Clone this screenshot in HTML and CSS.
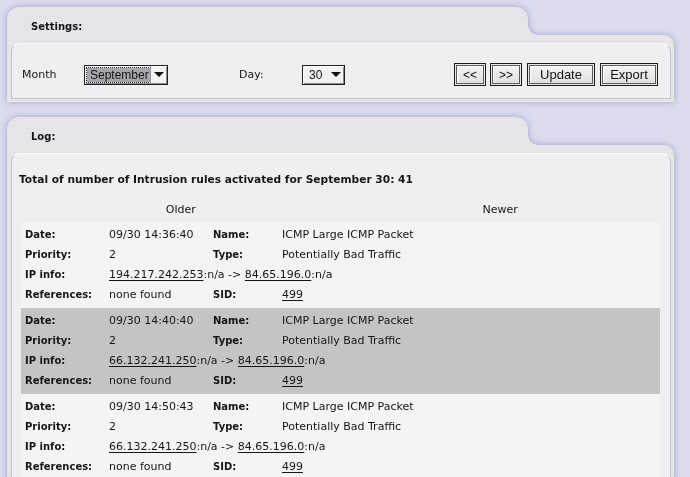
FILE: index.html
```html
<!DOCTYPE html>
<html>
<head>
<meta charset="utf-8">
<title>Intrusion log</title>
<link rel="stylesheet" href="styles.css">
</head>
<body>
<div class="panel">
  <div class="tab"><span class="tab-title">Settings:</span></div>
  <div class="body">
    <div class="inner settings">
      <span class="lbl lbl-month">Month</span>
      <div class="select select-month">
        <span class="select-value focused">September</span>
        <span class="select-arrow"><svg width="10" height="5" viewBox="0 0 10 5"><path d="M0 0H10L5 5Z" fill="#111"/></svg></span>
      </div>
      <span class="lbl lbl-day">Day:</span>
      <div class="select select-day">
        <span class="select-value">30</span>
        <span class="select-arrow"><svg width="10" height="5" viewBox="0 0 10 5"><path d="M0 0H10L5 5Z" fill="#111"/></svg></span>
      </div>
      <div class="buttons">
        <button class="btn btn-nav">&lt;&lt;</button>
        <button class="btn btn-nav">&gt;&gt;</button>
        <button class="btn btn-update">Update</button>
        <button class="btn btn-export">Export</button>
      </div>
    </div>
  </div>
</div>

<div class="panel panel-log">
  <div class="tab"><span class="tab-title">Log:</span></div>
  <div class="body">
    <div class="inner log">
      <div class="total">Total of number of Intrusion rules activated for September 30: 41</div>
      <div class="nav-head"><span>Older</span><span>Newer</span></div>
      <div class="entry">
        <b>Date:</b><span>09/30 14:36:40</span><b>Name:</b><span>ICMP Large ICMP Packet</span>
        <b>Priority:</b><span>2</span><b>Type:</b><span>Potentially Bad Traffic</span>
        <b>IP info:</b><span class="wide"><u>194.217.242.253</u>:n/a -&gt; <u>84.65.196.0</u>:n/a</span>
        <b>References:</b><span>none found</span><b>SID:</b><span><u>499</u></span>
      </div>
      <div class="entry alt">
        <b>Date:</b><span>09/30 14:40:40</span><b>Name:</b><span>ICMP Large ICMP Packet</span>
        <b>Priority:</b><span>2</span><b>Type:</b><span>Potentially Bad Traffic</span>
        <b>IP info:</b><span class="wide"><u>66.132.241.250</u>:n/a -&gt; <u>84.65.196.0</u>:n/a</span>
        <b>References:</b><span>none found</span><b>SID:</b><span><u>499</u></span>
      </div>
      <div class="entry">
        <b>Date:</b><span>09/30 14:50:43</span><b>Name:</b><span>ICMP Large ICMP Packet</span>
        <b>Priority:</b><span>2</span><b>Type:</b><span>Potentially Bad Traffic</span>
        <b>IP info:</b><span class="wide"><u>66.132.241.250</u>:n/a -&gt; <u>84.65.196.0</u>:n/a</span>
        <b>References:</b><span>none found</span><b>SID:</b><span><u>499</u></span>
      </div>
    </div>
  </div>
</div>
</body>
</html>
```

FILE: styles.css
```css
html, body {
  margin: 0;
  padding: 0;
  background: #dcdcee;
  overflow: hidden;
  height: 477px;
}
body {
  font-family: "DejaVu Sans", Verdana, sans-serif;
  font-size: 11px;
  color: #151515;
}
.panel {
  width: 667px;
  margin: 7px 0 0 7px;
  filter: drop-shadow(0 0 3px rgba(110, 110, 170, 0.55));
}
.panel-log {
  margin-top: 15px;
}
.tab {
  position: relative;
  width: 521px;
  height: 28px;
  box-sizing: border-box;
  padding: 13px 0 0 24px;
  border-radius: 12px 12px 0 0;
  background: repeating-linear-gradient(#e9e7eb 0 1px, #e3e1e6 1px 2px);
}
.tab::after {
  content: "";
  position: absolute;
  right: -10px;
  bottom: 0;
  width: 10px;
  height: 10px;
  background: radial-gradient(circle at 100% 0, transparent 9.5px, #e6e4e8 10px);
}
.tab-title {
  font-weight: bold;
  font-size: 10px;
  line-height: 14px;
  display: block;
}
.body {
  padding: 8px 3px 3px 4px;
  border-radius: 0 10px 0 0;
  background: repeating-linear-gradient(#e9e7eb 0 1px, #e3e1e6 1px 2px);
}
.inner {
  background: #f0eef1;
  border: 1px solid #c2c0c8;
  border-top-color: #ffffff;
  border-radius: 9px 9px 0 0;
}
.settings {
  display: flex;
  align-items: center;
  padding: 19px 12px 12px 10px;
  height: 23px;
}
.lbl-month {
  width: 62px;
}
.lbl-day {
  width: 63px;
  margin-left: 71px;
}
.select {
  display: flex;
  align-items: center;
  height: 20px;
  box-sizing: border-box;
  border: 1px solid #202020;
  background: #f2f2f2;
  box-shadow: inset 1px 1px 0 #ffffff, inset -1px -1px 0 #8a8a8a;
  font-family: "Liberation Sans", Arial, sans-serif;
  font-size: 12px;
}
.select-month {
  width: 84px;
}
.select-day {
  width: 43px;
}
.select-value {
  flex: 1;
  padding-left: 6px;
  line-height: 14px;
}
.select-value.focused {
  flex: none;
  width: 57px;
  margin-left: 2px;
  padding: 0 3px;
  background: #a6a6ac;
  outline: 1px dotted #222;
}
.select-arrow {
  width: 15px;
  height: 18px;
  display: flex;
  align-items: center;
  justify-content: center;
  padding-right: 1px;
}
.select-month .select-arrow {
  margin-left: auto;
  border-left: 1px solid #9a9a9a;
}
.buttons {
  margin-left: auto;
  display: flex;
  gap: 4px;
}
.btn {
  height: 23px;
  box-sizing: border-box;
  border: 1px solid #1c1c1c;
  background: linear-gradient(#f6f6f6, #dedede);
  box-shadow: inset 0 0 0 1px #e8e8e8, inset 0 0 0 2px #5a5a5a, inset 2px 2px 0 1px #ffffff;
  font-family: "Liberation Sans", Arial, sans-serif;
  font-size: 13px;
  color: #111;
  padding: 0;
  margin: 0;
}
.btn-nav {
  width: 32px;
  font-size: 12px;
}
.btn-update {
  width: 68px;
  margin-left: 1px;
}
.btn-export {
  width: 58px;
  margin-left: 1px;
}
.log {
  height: 360px;
}
.total {
  font-weight: bold;
  font-size: 10.65px;
  line-height: 14px;
  padding: 19px 0 0 7px;
}
.nav-head {
  display: grid;
  grid-template-columns: 1fr 1fr;
  margin: 13px 10px 0 9px;
  height: 22px;
  line-height: 20px;
  text-align: center;
}
.entry {
  display: grid;
  grid-template-columns: 84px 104px 69px 1fr;
  grid-auto-rows: 20px;
  align-items: center;
  margin: 0 10px 0 9px;
  padding: 2px 0 4px 4px;
  background: #f6f3f6;
}
.entry.alt {
  background: #c4c4c4;
}
.entry b {
  font-size: 10px;
}
.entry .wide {
  grid-column: 2 / 5;
}
.entry u {
  text-decoration: underline;
  text-underline-offset: 2px;
}
```
